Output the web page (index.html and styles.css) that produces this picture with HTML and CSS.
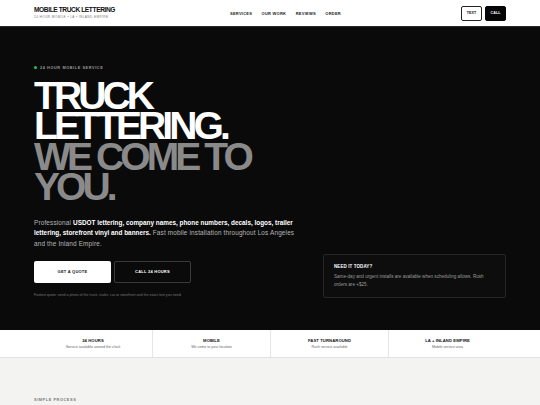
FILE: index.html
```html
<!DOCTYPE html>
<html>
<head>
<meta charset="utf-8">
<link rel="stylesheet" href="styles.css">
</head>
<body>
<header class="topbar">
  <div class="brand">
    <div class="brand-name">MOBILE TRUCK LETTERING</div>
    <div class="brand-sub">24 HOUR MOBILE • LA • INLAND EMPIRE</div>
  </div>
  <nav class="nav">
    <a>SERVICES</a>
    <a>OUR WORK</a>
    <a>REVIEWS</a>
    <a>ORDER</a>
  </nav>
  <div class="actions">
    <a class="btn-sm btn-outline">TEXT</a>
    <a class="btn-sm btn-dark">CALL</a>
  </div>
</header>

<section class="hero">
  <div class="hero-main">
    <div class="eyebrow"><span class="dot"></span>24 HOUR MOBILE SERVICE</div>
    <h1 class="headline"><span class="hl-white">TRUCK<br>LETTERING.</span><br><span class="hl-gray">WE COME TO<br>YOU.</span></h1>
    <p class="lead">Professional <strong>USDOT lettering, company names, phone numbers, decals, logos, trailer lettering, storefront vinyl and banners.</strong> Fast mobile installation throughout Los Angeles and the Inland Empire.</p>
    <div class="cta">
      <a class="btn btn-light">GET A QUOTE</a>
      <a class="btn btn-ghost">CALL 24 HOURS</a>
    </div>
    <p class="note">Fastest quote: send a photo of the truck, trailer, car or storefront and the exact text you need.</p>
  </div>
  <aside class="today">
    <div class="today-title">NEED IT TODAY?</div>
    <p class="today-text">Same-day and urgent installs are available when scheduling allows. Rush orders are +$25.</p>
  </aside>
</section>

<section class="stats">
  <div class="stat"><div class="stat-title">24 HOURS</div><div class="stat-sub">Service available around the clock</div></div>
  <div class="stat"><div class="stat-title">MOBILE</div><div class="stat-sub">We come to your location</div></div>
  <div class="stat"><div class="stat-title">FAST TURNAROUND</div><div class="stat-sub">Rush service available</div></div>
  <div class="stat"><div class="stat-title">LA + INLAND EMPIRE</div><div class="stat-sub">Mobile service area</div></div>
</section>

<section class="process">
  <div class="process-label">SIMPLE PROCESS</div>
</section>
</body>
</html>
```

FILE: styles.css
```css
* { box-sizing: border-box; }
html, body { margin: 0; padding: 0; }
body {
  font-family: "Liberation Sans", Arial, sans-serif;
  background: #f3f3f1;
  color: #111;
  width: 540px;
  overflow: hidden;
}
a { text-decoration: none; color: inherit; }

.topbar {
  height: 27px;
  background: #fff;
  display: flex;
  align-items: center;
  padding: 0 34px;
  border-bottom: 1px solid #2a2a2a;
}
.brand { display: flex; flex-direction: column; gap: 2px; }
.brand-name {
  font-size: 6.6px;
  font-weight: 700;
  letter-spacing: -0.06em;
  line-height: 1;
  color: #111;
}
.brand-sub {
  font-size: 3.2px;
  letter-spacing: 0.12em;
  color: #777;
  line-height: 1;
}
.nav {
  margin-left: auto;
  display: flex;
  gap: 9.5px;
  font-size: 4px;
  font-weight: 700;
  letter-spacing: 0.06em;
  color: #222;
}
.actions { margin-left: 120px; display: flex; gap: 3px; }
.btn-sm {
  width: 21px;
  height: 15px;
  display: flex;
  align-items: center;
  justify-content: center;
  font-size: 3.6px;
  font-weight: 700;
  border-radius: 2px;
  letter-spacing: 0.02em;
}
.btn-outline { border: 1px solid #222; background: #fff; color: #111; }
.btn-dark { background: #050505; color: #fff; border: 1px solid #050505; }

.hero {
  background: #0a0a0a;
  height: 303px;
  padding: 0 34px 32px;
  display: flex;
  align-items: flex-end;
  justify-content: space-between;
}
.hero-main { width: 272px; flex-shrink: 0; }
.eyebrow {
  display: flex;
  align-items: center;
  gap: 3px;
  font-size: 3.8px;
  font-weight: 700;
  letter-spacing: 0.16em;
  color: #9a9a9a;
  line-height: 6px;
}
.dot { width: 3px; height: 3px; border-radius: 50%; background: #22c55e; }
.headline {
  margin: 10px 0 0;
  font-size: 39px;
  line-height: 30.5px;
  font-weight: 700;
  letter-spacing: -0.1em;
  white-space: nowrap;
}
.hl-white { color: #fff; }
.hl-gray { color: #8a8a8a; }
.lead {
  margin: 15px 0 0;
  width: 262px;
  font-size: 6.4px;
  line-height: 10.5px;
  letter-spacing: 0.025em;
  color: #b5b5b5;
}
.lead strong { color: #fff; font-weight: 700; letter-spacing: 0; }
.cta { margin-top: 11.5px; display: flex; gap: 3px; }
.btn {
  width: 77px;
  height: 22px;
  display: flex;
  align-items: center;
  justify-content: center;
  font-size: 4px;
  font-weight: 700;
  letter-spacing: 0.06em;
  border-radius: 2px;
}
.btn-light { background: #fff; color: #111; }
.btn-ghost { border: 1px solid #3a3a3a; color: #fff; }
.note {
  margin: 10.5px 0 0;
  font-size: 3.6px;
  line-height: 5px;
  color: #777;
  white-space: nowrap;
}
.today {
  width: 183px;
  flex-shrink: 0;
  border: 1px solid #262626;
  background: #0d0d0d;
  border-radius: 2px;
  padding: 9px 10px 8px;
  margin-bottom: 0;
}
.today-title {
  font-size: 4.5px;
  font-weight: 700;
  color: #fff;
  letter-spacing: 0.02em;
}
.today-text {
  margin: 4px 0 0;
  font-size: 4.6px;
  line-height: 8px;
  color: #999;
}

.stats {
  background: #fff;
  height: 28px;
  padding: 0 34px;
  display: grid;
  grid-template-columns: repeat(4, 1fr);
  border-bottom: 1px solid #e2e2e2;
}
.stat {
  display: flex;
  flex-direction: column;
  align-items: center;
  justify-content: center;
  gap: 2px;
  border-left: 1px solid #e6e6e6;
}
.stat:first-child { border-left: none; }
.stat-title {
  font-size: 4.2px;
  font-weight: 700;
  color: #111;
  letter-spacing: 0.02em;
}
.stat-sub { font-size: 3.6px; color: #666; }

.process { padding: 40px 34px 0; }
.process-label {
  font-size: 3.8px;
  font-weight: 700;
  letter-spacing: 0.16em;
  color: #777;
}
```
